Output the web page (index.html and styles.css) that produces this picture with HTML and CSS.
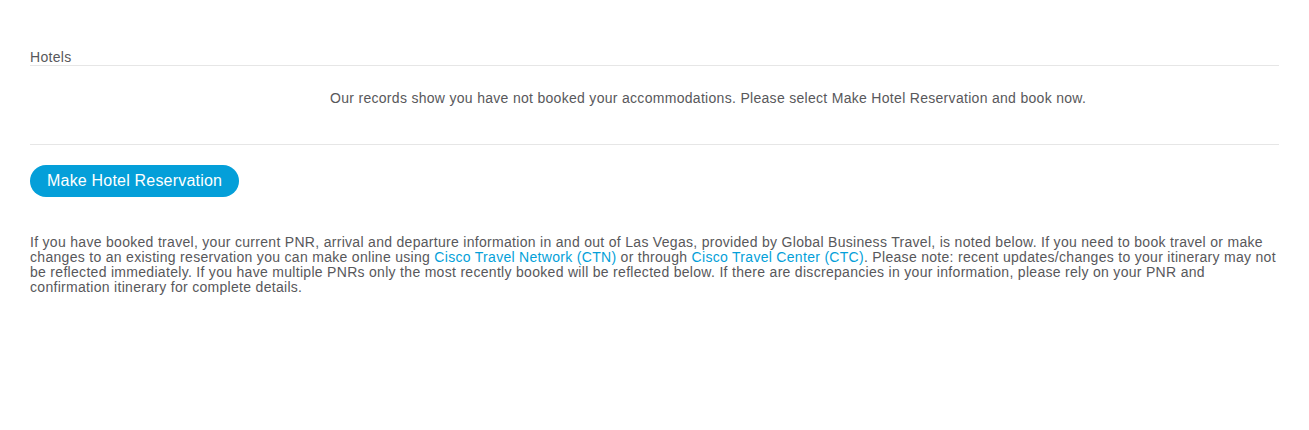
FILE: index.html
```html
<!DOCTYPE html>
<html>
<head>
<meta charset="utf-8">
<link rel="stylesheet" href="styles.css">
</head>
<body>
<div class="wrap">
  <div class="section-title">Hotels</div>
  <div class="message">Our records show you have not booked your accommodations. Please select Make Hotel Reservation and book now.</div>
  <div class="actions"><button class="btn">Make Hotel Reservation</button></div>
  <p class="note">If you have booked travel, your current PNR, arrival and departure information in and out of Las Vegas, provided by Global Business Travel, is noted below. If you need to book travel or make changes to an existing reservation you can make online using <a href="#">Cisco Travel Network (CTN)</a> or through <a href="#">Cisco Travel Center (CTC)</a>. Please note: recent updates/changes to your itinerary may not be reflected immediately. If you have multiple PNRs only the most recently booked will be reflected below. If there are discrepancies in your information, please rely on your PNR and confirmation itinerary for complete details.</p>
</div>
</body>
</html>
```

FILE: styles.css
```css
html, body {
  margin: 0;
  padding: 0;
  background: #ffffff;
}
body {
  font-family: "Liberation Sans", Arial, sans-serif;
  color: #58585b;
  font-size: 14px;
  letter-spacing: 0.3px;
}
.wrap {
  padding: 49px 30px 0 30px;
}
.section-title {
  font-size: 14px;
  line-height: 16px;
  border-bottom: 1px solid #e6e6e6;
}
.message {
  font-size: 14px;
  line-height: 15px;
  padding: 25px 0 38px 300px;
  border-bottom: 1px solid #e6e6e6;
}
.actions {
  padding-top: 20px;
}
.btn {
  display: inline-block;
  height: 32px;
  padding: 0 17px;
  border: none;
  border-radius: 16px;
  background: #049fd9;
  color: #ffffff;
  font-family: "Liberation Sans", Arial, sans-serif;
  font-size: 16px;
  letter-spacing: 0.2px;
  line-height: 32px;
  cursor: pointer;
}
.note {
  margin: 38px 0 0 0;
  font-size: 14px;
  line-height: 15px;
}
.note a {
  color: #049fd9;
  text-decoration: none;
}
```
